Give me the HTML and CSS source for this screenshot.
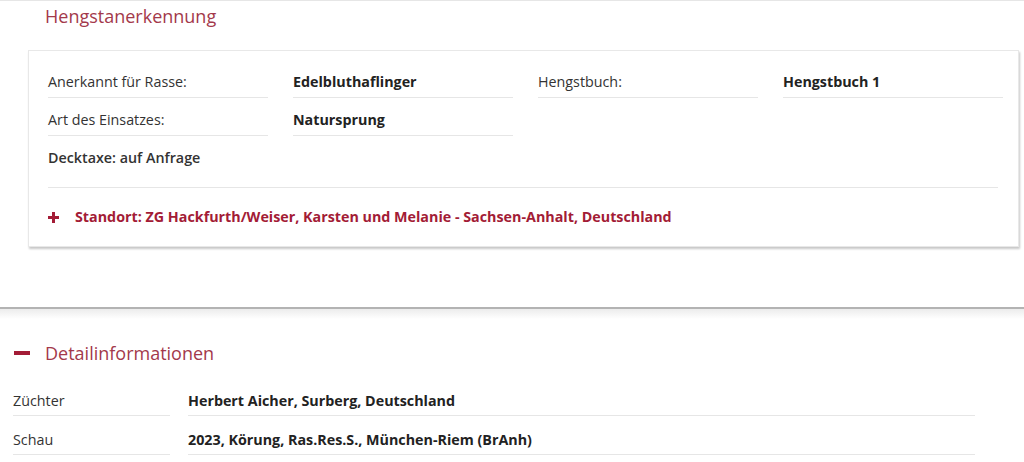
FILE: index.html
```html
<!DOCTYPE html>
<html lang="de">
<head>
<meta charset="utf-8">
<title>Hengstanerkennung</title>
<link rel="stylesheet" href="styles.css">
</head>
<body>
<section class="upper">
  <h2 class="title">Hengstanerkennung</h2>
  <div class="card">
    <div class="grid">
      <div class="cell label">Anerkannt für Rasse:</div>
      <div class="cell value">Edelbluthaflinger</div>
      <div class="cell label">Hengstbuch:</div>
      <div class="cell value">Hengstbuch 1</div>
      <div class="cell label">Art des Einsatzes:</div>
      <div class="cell value">Natursprung</div>
      <div class="wide">Decktaxe: auf Anfrage</div>
    </div>
    <hr class="sep">
    <div class="standort"><span class="plus"></span>Standort: ZG Hackfurth/Weiser, Karsten und Melanie - Sachsen-Anhalt, Deutschland</div>
  </div>
</section>
<section class="lower">
  <h2 class="title detail"><span class="minus"></span>Detailinformationen</h2>
  <div class="dl">
    <div class="dt">Züchter</div>
    <div class="dd">Herbert Aicher, Surberg, Deutschland</div>
    <div class="dt">Schau</div>
    <div class="dd">2023, Körung, Ras.Res.S., München-Riem (BrAnh)</div>
  </div>
</section>
</body>
</html>
```
FILE: styles.css
```css
html, body {
  margin: 0;
  padding: 0;
  background: #fff;
  font-family: "Open Sans", "Noto Sans", sans-serif;
  font-size: 14.3px;
  color: #333;
}
.upper {
  border-top: 1px solid #e6e6e6;
  border-bottom: 2px solid #b3b3b3;
  height: 309px;
  box-sizing: border-box;
}
.title {
  margin: 0;
  padding: 3px 0 0 45px;
  font-size: 18px;
  font-weight: 400;
  line-height: 24px;
  color: #a3394b;
}
.card {
  margin: 22px 5px 0 28px;
  border: 1px solid #e8e8e8;
  box-shadow: 1px 2px 2px rgba(0, 0, 0, 0.22);
  padding: 9px 16px 19px 19px;
  background: #fff;
}
.grid {
  display: grid;
  grid-template-columns: repeat(4, 220px);
  column-gap: 25px;
}
.cell {
  padding: 12px 0 5px;
  line-height: 20px;
  border-bottom: 1px solid #e6e6e6;
}
.label {
  color: #333;
}
.value {
  font-weight: 700;
  color: #222;
}
.wide {
  grid-column: 1 / -1;
  padding: 12px 0 5px;
  line-height: 20px;
  font-weight: 600;
  color: #333;
}
.sep {
  width: 950px;
  margin: 14px 0 0;
  border: 0;
  border-top: 1px solid #e6e6e6;
  height: 0;
}
.standort {
  display: flex;
  align-items: center;
  padding: 19px 0 0;
  line-height: 20px;
  font-weight: 700;
  color: #a31c36;
}
.plus {
  position: relative;
  display: inline-block;
  width: 11px;
  height: 11px;
  margin-right: 16px;
}
.plus::before,
.plus::after {
  content: "";
  position: absolute;
  background: #a31c36;
}
.plus::before {
  left: 0;
  top: 4px;
  width: 11px;
  height: 3.5px;
}
.plus::after {
  left: 3.75px;
  top: 0;
  width: 3.5px;
  height: 11px;
}
.lower {
  background: linear-gradient(#ececec, #fff 10px);
  padding-top: 29px;
}
.detail {
  display: flex;
  align-items: center;
  padding-left: 14px;
}
.minus {
  display: inline-block;
  width: 16px;
  height: 4px;
  background: #a31c36;
  margin-right: 15px;
}
.dl {
  display: grid;
  grid-template-columns: 157px 787px;
  column-gap: 18px;
  margin: 12px 0 0 13px;
}
.dt, .dd {
  padding: 10px 0 1px;
  line-height: 27px;
  border-bottom: 1px solid #e6e6e6;
}
.dd {
  font-weight: 700;
  color: #222;
}
```
